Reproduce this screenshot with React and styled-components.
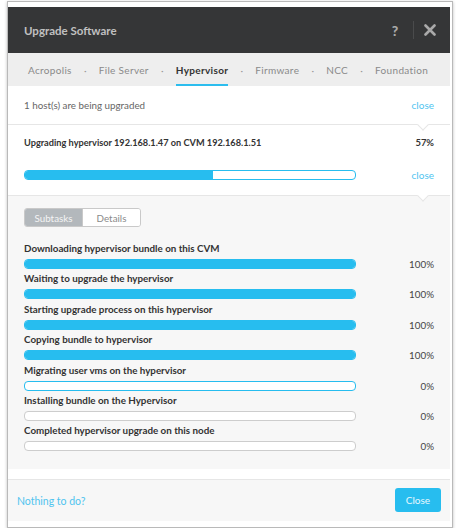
import React from 'react';
import styled, { createGlobalStyle } from 'styled-components';

const Global = createGlobalStyle`
  html, body {
    margin: 0;
    padding: 0;
    background: #ffffff;
  }
  body {
    font-family: Lato, "Open Sans", "Liberation Sans", sans-serif;
    -webkit-font-smoothing: antialiased;
  }
`;

const Frame = styled.div`
  margin: 1px 2px 0 7px;
  width: 446px;
  height: 527px;
  border: 1px solid #b9b9b9;
  box-shadow: 0 1px 3px rgba(0, 0, 0, 0.25);
  padding: 5px 4px 0 0;
  box-sizing: border-box;
  background: #ffffff;
  overflow: hidden;
`;

const Modal = styled.div`
  width: 442px;
  display: flex;
  flex-direction: column;
`;

const Header = styled.div`
  height: 46px;
  background: #353637;
  display: flex;
  align-items: center;
  padding: 0 11px 0 16px;
`;

const Title = styled.div`
  flex: 1;
  color: #c0c0c0;
  font-size: 11.5px;
  font-weight: 700;
`;

const HeaderIcon = styled.div`
  color: #a9a9a9;
  font-size: 14px;
  font-weight: 900;
  width: 18px;
  display: flex;
  justify-content: center;
  align-items: center;
`;

const Divider = styled.div`
  width: 1px;
  height: 18px;
  background: #4a4b4c;
  margin: 0 7px 0 9px;
`;

const TabBar = styled.div`
  height: 33px;
  background: #eeeeee;
  display: flex;
  align-items: stretch;
  padding-left: 20px;
  box-sizing: border-box;
`;

const Tab = styled.div`
  display: flex;
  align-items: center;
  white-space: nowrap;
  font-size: 10px;
  letter-spacing: 0.32px;
  color: ${(p) => (p.$active ? '#333333' : '#8a8a8a')};
  font-weight: ${(p) => (p.$active ? 700 : 400)};
  border-bottom: 2px solid ${(p) => (p.$active ? '#2cbdee' : 'transparent')};
  border-top: 2px solid transparent;
`;

const Dot = styled.div`
  display: flex;
  align-items: center;
  color: #9a9a9a;
  font-size: 10px;
  width: 27px;
  flex: none;
  justify-content: center;
`;

const Section = styled.div`
  position: relative;
  background: ${(p) => p.$bg || '#ffffff'};
  border-bottom: 1px solid ${(p) => (p.$flat ? 'transparent' : '#e6e6e6')};
  padding: ${(p) => p.$pad};
  height: ${(p) => p.$h || 'auto'};
  box-sizing: content-box;
`;

const Caret = styled.div`
  position: absolute;
  right: 23px;
  bottom: -5px;
  width: 7px;
  height: 7px;
  background: ${(p) => p.$bg || '#ffffff'};
  border-right: 1px solid #e6e6e6;
  border-bottom: 1px solid #e6e6e6;
  transform: rotate(45deg);
  z-index: 1;
`;

const Row = styled.div`
  display: flex;
  align-items: center;
  justify-content: space-between;
  height: ${(p) => p.$h || 'auto'};
`;

const Muted = styled.div`
  font-size: 9.8px;
  line-height: 14px;
  color: #666666;
`;

const Link = styled.a`
  font-size: ${(p) => p.$size || '10px'};
  line-height: 10px;
  color: #4fc4ef;
  text-decoration: none;
  cursor: pointer;
`;

const Strong = styled.div`
  font-size: ${(p) => p.$size || '9.8px'};
  font-weight: 700;
  color: #333333;
  line-height: 14px;
`;

const BarGrid = styled.div`
  display: grid;
  grid-template-columns: 332px 1fr;
  align-items: center;
  margin-top: ${(p) => p.$mt || 0}px;
`;

const Track = styled.div`
  height: 10px;
  box-sizing: border-box;
  border: 1px solid ${(p) => (p.$active ? '#27bdef' : '#cdcdcd')};
  border-radius: 4px;
  background: #ffffff;
  overflow: hidden;
`;

const Fill = styled.div`
  height: 100%;
  background: #27bdef;
`;

const Right = styled.div`
  justify-self: end;
  display: flex;
`;

const Segmented = styled.div`
  display: inline-flex;
  align-self: flex-start;
  border: 1px solid #c9c9c9;
  border-radius: 3px;
  overflow: hidden;
  margin-bottom: 14px;
`;

const SegButton = styled.div`
  width: 57px;
  height: 17px;
  display: flex;
  align-items: center;
  justify-content: center;
  font-size: 9.8px;
  color: ${(p) => (p.$active ? '#f4f4f4' : '#8a8a8a')};
  background: ${(p) => (p.$active ? '#b3b8bc' : '#ffffff')};
  & + & {
    border-left: 1px solid #c9c9c9;
  }
`;

const Body = styled.div`
  display: flex;
  flex-direction: column;
`;

const SubtaskList = styled.div`
  display: flex;
  flex-direction: column;
  gap: 2.4px;
`;

const Subtask = styled.div`
  display: flex;
  flex-direction: column;
  gap: 4px;
`;

const Pct = styled.div`
  font-size: 9.8px;
  line-height: 10px;
  color: #444444;
  justify-self: end;
`;

const Spacer = styled.div`
  height: 10px;
  border-bottom: 1px solid #e6e6e6;
`;

const Footer = styled.div`
  height: 41px;
  background: #f7f7f7;
  display: flex;
  align-items: center;
  justify-content: space-between;
  padding: 0 9px;
`;

const Button = styled.button`
  width: 46px;
  height: 24px;
  border: none;
  border-radius: 3px;
  background: #27bdef;
  color: #e8f8fe;
  font-family: inherit;
  font-size: 10px;
  padding: 0;
  margin-bottom: 2px;
`;

const tabs = ['Acropolis', 'File Server', 'Hypervisor', 'Firmware', 'NCC', 'Foundation'];

const subtasks = [
  ['Downloading hypervisor bundle on this CVM', 100],
  ['Waiting to upgrade the hypervisor', 100],
  ['Starting upgrade process on this hypervisor', 100],
  ['Copying bundle to hypervisor', 100],
  ['Migrating user vms on the hypervisor', 0, true],
  ['Installing bundle on the Hypervisor', 0],
  ['Completed hypervisor upgrade on this node', 0],
];

const CloseIcon = () => (
  <svg width="12" height="12" viewBox="0 0 12 12">
    <path d="M1.5 1.5 L10.5 10.5 M10.5 1.5 L1.5 10.5" stroke="#a9a9a9" strokeWidth="2.6" strokeLinecap="round" />
  </svg>
);

export default function App() {
  return (
    <>
      <Global />
      <Frame>
        <Modal>
          <Header>
            <Title>Upgrade Software</Title>
            <HeaderIcon>?</HeaderIcon>
            <Divider />
            <HeaderIcon>
              <CloseIcon />
            </HeaderIcon>
          </Header>

          <TabBar>
            {tabs.map((t, i) => (
              <React.Fragment key={t}>
                {i > 0 && <Dot>·</Dot>}
                <Tab $active={t === 'Hypervisor'}>{t}</Tab>
              </React.Fragment>
            ))}
          </TabBar>

          <Section $pad="0 16px" $h="38px">
            <Row $h="38px">
              <Muted>1 host(s) are being upgraded</Muted>
              <Link>close</Link>
            </Row>
            <Caret />
          </Section>

          <Section $pad="11px 16px 15px">
            <Row>
              <Strong $size="9.2px">Upgrading hypervisor 192.168.1.47 on CVM 192.168.1.51</Strong>
              <Strong $size="9.4px">57%</Strong>
            </Row>
            <BarGrid $mt={20}>
              <Track $active>
                <Fill style={{ width: '57%' }} />
              </Track>
              <Right>
                <Link>close</Link>
              </Right>
            </BarGrid>
            <Caret />
          </Section>

          <Section $bg="#f7f7f7" $pad="12px 16px 17px" $flat>
            <Body>
              <Segmented>
                <SegButton $active>Subtasks</SegButton>
                <SegButton>Details</SegButton>
              </Segmented>
              <SubtaskList>
                {subtasks.map(([label, pct, active]) => (
                  <Subtask key={label}>
                    <Strong>{label}</Strong>
                    <BarGrid>
                      <Track $active={pct > 0 || active}>
                        <Fill style={{ width: `${pct}%` }} />
                      </Track>
                      <Pct>{pct}%</Pct>
                    </BarGrid>
                  </Subtask>
                ))}
              </SubtaskList>
            </Body>
          </Section>

          <Spacer />

          <Footer>
            <Link $size="10.5px">Nothing to do?</Link>
            <Button>Close</Button>
          </Footer>
        </Modal>
      </Frame>
    </>
  );
}
